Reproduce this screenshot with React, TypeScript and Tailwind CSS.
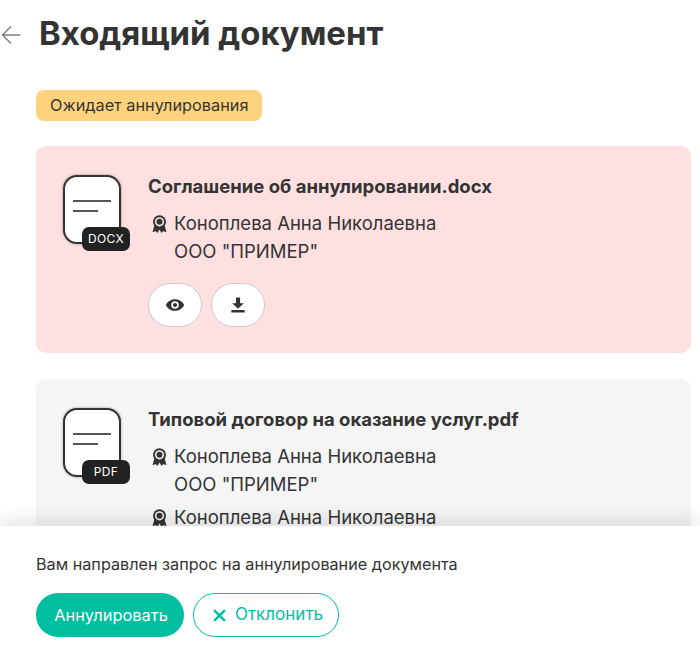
import React from "react";

const font = { fontFamily: '"Inter", "Noto Sans", sans-serif' };

function FileIcon({ ext }: { ext: string }) {
  return (
    <div className="relative h-[79px] w-[68px] shrink-0">
      <div className="flex h-[69px] w-[58px] flex-col gap-[8px] rounded-[14px] border-2 border-[#333333] bg-white pl-[8px] pt-[23px] shadow-[0_0_3px_rgba(0,0,0,0.35)]">
        <div className="h-[2px] w-[38px] bg-[#555555]" />
        <div className="h-[2px] w-[25px] bg-[#555555]" />
      </div>
      <div className="absolute left-[19px] top-[52px] flex h-[24px] w-[48px] items-center justify-center rounded-[7px] bg-[#222222] text-[12px] tracking-[0.3px] text-white">
        {ext}
      </div>
    </div>
  );
}

function Signer({ org = true }: { org?: boolean }) {
  return (
    <div className="flex items-start gap-[7px]">
      <svg viewBox="0 0 15 18" className="mt-[6px] h-[18px] w-[15px] shrink-0" fill="none">
        <path d="M2.500 10 0.500 17 4 16.200 5.500 18 7.500 14.500 9.500 18 11 16.200 14.500 17 12.500 10Z" fill="#333333" />
        <circle cx="7.500" cy="6.800" r="6.500" fill="#333333" />
        <circle cx="7.500" cy="6.800" r="4.600" fill="#f6f0f0" />
        <circle cx="7.500" cy="6.800" r="3" fill="#333333" />
      </svg>
      <div className="text-[18.500px] leading-[28px] text-[#333333]">
        <div>Коноплева Анна Николаевна</div>
        {org && <div>ООО "ПРИМЕР"</div>}
      </div>
    </div>
  );
}

function RoundButton({ children }: { children: React.ReactNode }) {
  return (
    <button className="flex h-[44px] w-[54px] items-center justify-center rounded-[22px] border border-[#cfc9c9] bg-white">
      {children}
    </button>
  );
}

export default function App() {
  return (
    <div className="relative h-[647px] w-[700px] overflow-hidden bg-white text-[#333333]" style={font}>
      <div className="flex items-center pt-[12px]">
        <svg viewBox="0 0 20 20" className="ml-[1px] mt-[4px] h-[20px] w-[20px] shrink-0" fill="none" stroke="#808080" strokeWidth="1.500">
          <path d="M19.500 10H1.500M10 1.500 1.500 10l8.500 8.500" />
        </svg>
        <h1 className="ml-[18px] text-[32.900px] font-bold leading-[42px] text-[#333333]">Входящий документ</h1>
      </div>

      <div className="ml-[36px] mt-[36px] flex h-[31px] w-fit items-center rounded-[8px] bg-[#ffd37d] px-[14px] text-[16.300px] text-[#333333]">
        Ожидает аннулирования
      </div>

      <div className="ml-[36px] mr-[9px] mt-[25px] flex flex-col gap-[26px]">
        <section className="flex h-[207px] gap-[17px] rounded-[10px] bg-[#ffe0e0] pl-[27px] pt-[29px]">
          <FileIcon ext="DOCX" />
          <div className="flex flex-col">
            <h2 className="text-[18.500px] font-bold leading-[22px]">Соглашение об аннулировании.docx</h2>
            <div className="ml-[4px] mt-[12px]">
              <Signer />
            </div>
            <div className="mt-[18px] flex gap-[9px]">
              <RoundButton>
                <svg viewBox="0 0 24 24" className="h-[20px] w-[20px]" fill="#333333">
                  <path d="M12 5C7 5 2.700 8 1 12c1.700 4 6 7 11 7s9.300-3 11-7c-1.700-4-6-7-11-7Zm0 11.500A4.500 4.500 0 1 1 12 7.500a4.500 4.500 0 0 1 0 9Zm0-7a2.500 2.500 0 1 0 0 5 2.500 2.500 0 0 0 0-5Z" />
                </svg>
              </RoundButton>
              <RoundButton>
                <svg viewBox="0 0 24 24" className="h-[20px] w-[20px]" fill="#333333">
                  <path d="M9.500 3h5v7h4.500L12 16.500 5 10h4.500ZM4 18h16v3H4Z" />
                </svg>
              </RoundButton>
            </div>
          </div>
        </section>

        <section className="flex h-[300px] gap-[17px] rounded-[10px] bg-[#f5f5f5] pl-[27px] pt-[29px]">
          <FileIcon ext="PDF" />
          <div className="flex flex-col">
            <h2 className="text-[18.500px] font-bold leading-[22px]">Типовой договор на оказание услуг.pdf</h2>
            <div className="ml-[4px] mt-[12px] flex flex-col gap-[5px]">
              <Signer />
              <Signer org={false} />
            </div>
          </div>
        </section>
      </div>

      <div className="absolute inset-x-0 bottom-0 h-[121px] bg-white px-[36px] pt-[28px] shadow-[0_-8px_16px_rgba(0,0,0,0.09)]">
        <p className="text-[16.200px] leading-[20px] text-[#333333]">Вам направлен запрос на аннулирование документа</p>
        <div className="mt-[19px] flex gap-[9px]">
          <button className="flex h-[44px] w-[148px] items-center justify-center rounded-[22px] bg-[#00bfa0] pl-[2px] text-[16.400px] text-white">
            Аннулировать
          </button>
          <button className="flex h-[44px] w-[146px] items-center justify-center gap-[9px] rounded-[22px] border border-[#00bfa0] bg-white pl-[4px] text-[17px] text-[#00bfa0]">
            <svg viewBox="0 0 12 12" className="h-[13px] w-[13px]" fill="none" stroke="#00bfa0" strokeWidth="2.200">
              <path d="M1 1l10 10M11 1 1 11" />
            </svg>
            Отклонить
          </button>
        </div>
      </div>
    </div>
  );
}
